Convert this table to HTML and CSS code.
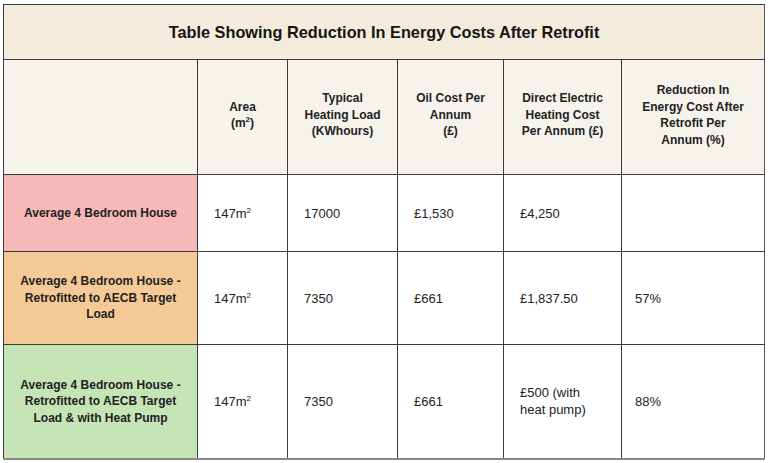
FILE: index.html
```html
<!DOCTYPE html>
<html>
<head>
<meta charset="utf-8">
<link rel="stylesheet" href="styles.css">
</head>
<body>
<table class="energy">
  <colgroup>
    <col class="c1"><col class="c2"><col class="c3"><col class="c4"><col class="c5"><col class="c6">
  </colgroup>
  <tr class="title-row">
    <th colspan="6" class="title">Table Showing Reduction In Energy Costs After Retrofit</th>
  </tr>
  <tr class="head-row">
    <th></th>
    <th>Area<br>(m<sup>2</sup>)</th>
    <th>Typical<br>Heating Load<br>(KWhours)</th>
    <th>Oil Cost Per<br>Annum<br>(£)</th>
    <th>Direct Electric<br>Heating Cost<br>Per Annum (£)</th>
    <th>Reduction In<br>Energy Cost After<br>Retrofit Per<br>Annum (%)</th>
  </tr>
  <tr class="row1">
    <th class="label pink">Average 4 Bedroom House</th>
    <td>147m<sup>2</sup></td>
    <td>17000</td>
    <td>£1,530</td>
    <td>£4,250</td>
    <td></td>
  </tr>
  <tr class="row2">
    <th class="label orange">Average 4 Bedroom House -<br>Retrofitted to AECB Target<br>Load</th>
    <td>147m<sup>2</sup></td>
    <td>7350</td>
    <td>£661</td>
    <td>£1,837.50</td>
    <td>57%</td>
  </tr>
  <tr class="row3">
    <th class="label green">Average 4 Bedroom House -<br>Retrofitted to AECB Target<br>Load &amp; with Heat Pump</th>
    <td>147m<sup>2</sup></td>
    <td>7350</td>
    <td>£661</td>
    <td>£500 (with<br>heat pump)</td>
    <td>88%</td>
  </tr>
</table>
</body>
</html>
```
FILE: styles.css
```css
html, body {
  margin: 0;
  padding: 0;
  background: #ffffff;
}
body {
  padding: 4px 0 0 3px;
  font-family: "Liberation Sans", Arial, sans-serif;
  color: #1a1a1a;
}
.energy {
  border-collapse: collapse;
  table-layout: fixed;
  width: 761px;
  font-size: 12px;
  line-height: 16.5px;
}
.c1 { width: 194px; }
.c2 { width: 90px; }
.c3 { width: 110px; }
.c4 { width: 106px; }
.c5 { width: 118px; }
.c6 { width: 143px; }
.energy th, .energy td {
  border: 1px solid #3a3a3a;
  padding: 0;
}
.title-row { height: 55px; }
.title {
  background: #f3ebdc;
  font-size: 16.3px;
  font-weight: bold;
  text-align: center;
  color: #151515;
  padding-bottom: 2px;
}
.head-row { height: 115px; }
.head-row th {
  background: #f6f2ec;
  font-weight: bold;
  text-align: center;
  color: #222;
  padding-bottom: 4px;
}
.row1 { height: 77px; }
.row2 { height: 93px; }
.row3 { height: 114px; }
.energy td {
  padding-left: 16px;
  text-align: left;
  color: #222;
  background: #ffffff;
  font-size: 13px;
  line-height: 17px;
}
.energy td:last-child { padding-left: 13px; }
.label {
  font-weight: bold;
  text-align: center;
  color: #222;
}
.pink { background: #f7b9b8; }
.orange { background: #f5ca96; }
.green { background: #c5e5b6; }
sup {
  font-size: 8px;
  line-height: 0;
  vertical-align: 5px;
}
.energy tr:last-child > * { border-bottom: 2px solid #8a8a8a; }
.energy tr > *:last-child { border-right: 1px solid #555; }
```
